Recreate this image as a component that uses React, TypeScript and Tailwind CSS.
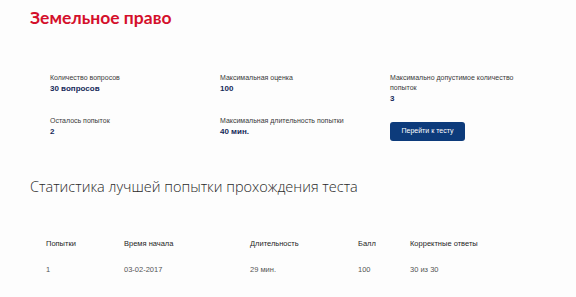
const info = [
  { label: "Количество вопросов", value: "30 вопросов" },
  { label: "Максимальная оценка", value: "100" },
  { label: "Максимально допустимое количество попыток", value: "3" },
  { label: "Осталось попыток", value: "2" },
  { label: "Максимальная длительность попытки", value: "40 мин." },
];

const cols = ["w-[78px]", "w-[126px]", "w-[108px]", "w-[52px]", "w-auto"];
const head = ["Попытки", "Время начала", "Длительность", "Балл", "Корректные ответы"];
const row = ["1", "03-02-2017", "29 мин.", "100", "30 из 30"];

function Info({ label, value }: { label: string; value: string }) {
  return (
    <div className="w-[130px]">
      <div className="text-[7px] leading-[10px] text-[#3a3a3a]">{label}</div>
      <div className="text-[8px] leading-[11px] font-bold text-[#16295a]">{value}</div>
    </div>
  );
}

export default function App() {
  return (
    <div className="w-[576px] h-[297px] bg-[#fdfdfd] font-['Liberation_Sans',sans-serif] overflow-hidden">
      <div className="px-[30px] pt-[7px]">
        <h1 className="font-['Lato',sans-serif] font-bold text-[17.5px] leading-[22px] text-[#d4102b]">
          Земельное право
        </h1>
      </div>

      <div className="grid grid-cols-[170px_170px_1fr] pl-[50px] pt-[44px] gap-y-[12px]">
        <Info {...info[0]} />
        <Info {...info[1]} />
        <Info {...info[2]} />
        <Info {...info[3]} />
        <Info {...info[4]} />
        <div>
          <button className="w-[75px] h-[19px] rounded-[3px] bg-[#0d3b7b] text-white text-[7px]">
            Перейти к тесту
          </button>
        </div>
      </div>

      <h2 className="pl-[30px] pt-[36px] font-['Open_Sans',sans-serif] font-light text-[14.5px] leading-[20px] text-[#2a2a2a]">
        Статистика лучшей попытки прохождения теста
      </h2>

      <div className="ml-[26px] mr-[16px] mt-[42px] px-[20px]">
        <div className="flex text-[7.5px] leading-[10px] text-[#1e1e1e]">
          {head.map((h, i) => (
            <div key={h} className={cols[i]}>{h}</div>
          ))}
        </div>
        <div className="flex text-[7.5px] leading-[10px] text-[#555] mt-[16px]">
          {row.map((c, i) => (
            <div key={i} className={cols[i]}>{c}</div>
          ))}
        </div>
      </div>
    </div>
  );
}
